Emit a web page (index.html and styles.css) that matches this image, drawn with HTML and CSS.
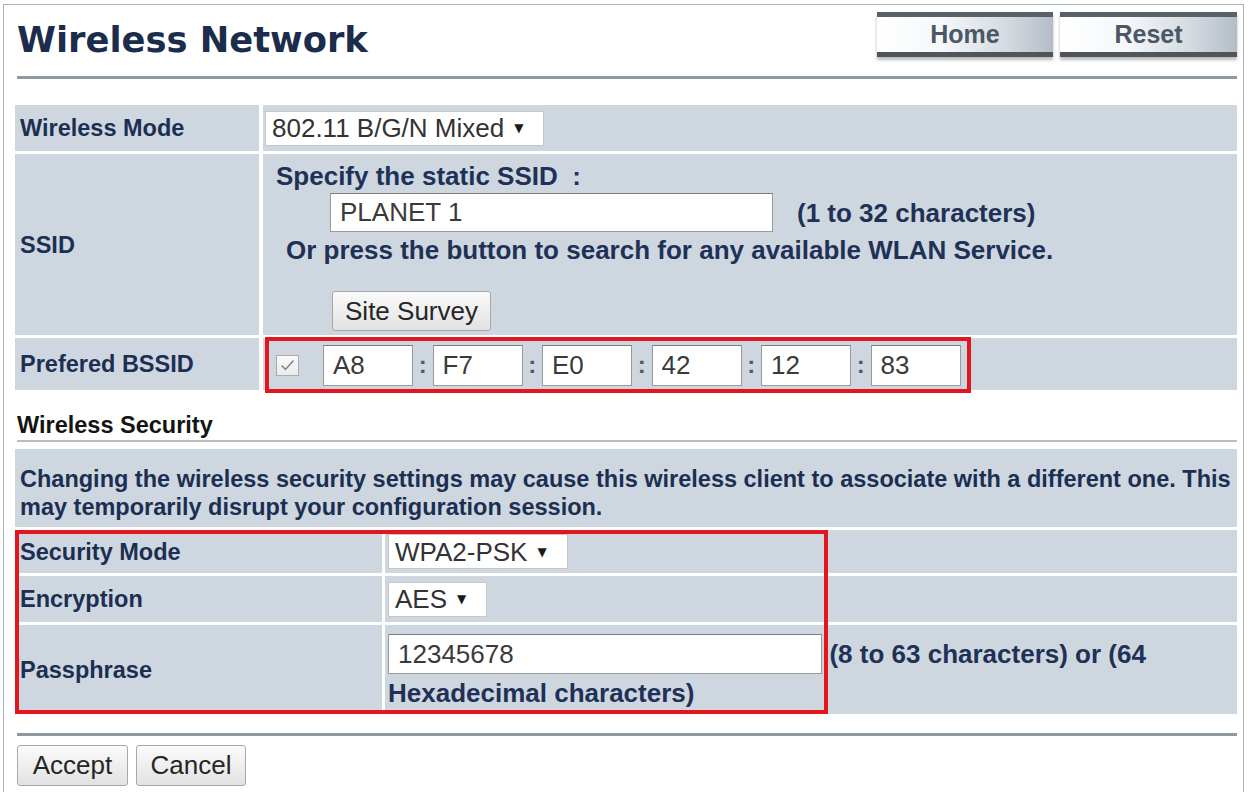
FILE: index.html
```html
<!DOCTYPE html>
<html lang="en">
<head>
<meta charset="utf-8">
<title>Wireless Network</title>
<link rel="stylesheet" href="styles.css">
</head>
<body>
<div class="frame">
  <header class="page-head">
    <h1 class="page-title">Wireless Network</h1>
    <nav class="tabs">
      <a class="tab" href="#">Home</a>
      <a class="tab tab-wide" href="#">Reset</a>
    </nav>
  </header>
  <div class="rule"></div>

  <div class="basic">
    <div class="cell label">Wireless Mode</div>
    <div class="cell value">
      <span class="select">802.11 B/G/N Mixed<span class="caret">▼</span></span>
    </div>

    <div class="cell label">SSID</div>
    <div class="cell value-ssid">
      <div class="hint">Specify the static SSID &nbsp;:</div>
      <div class="ssid-line">
        <input class="field ssid-field" type="text" value="PLANET 1">
        <span class="hint ssid-range">(1 to 32 characters)</span>
      </div>
      <div class="hint survey-note">Or press the button to search for any available WLAN Service.</div>
      <div class="survey-line"><button class="btn survey-btn" type="button">Site Survey</button></div>
    </div>

    <div class="cell label">Prefered BSSID</div>
    <div class="cell value-bssid">
      <div class="bssid">
        <span class="check">
          <svg width="21" height="19" viewBox="0 0 21 19"><path d="M4.5 9.5 L8.5 13.5 L16.5 4.5" fill="none" stroke="#80868c" stroke-width="1.5"/></svg>
        </span>
        <input class="field octet" type="text" value="A8"><span class="sep">:</span><input class="field octet" type="text" value="F7"><span class="sep">:</span><input class="field octet" type="text" value="E0"><span class="sep">:</span><input class="field octet" type="text" value="42"><span class="sep">:</span><input class="field octet" type="text" value="12"><span class="sep">:</span><input class="field octet" type="text" value="83">
      </div>
    </div>
  </div>

  <div class="section-title">Wireless Security</div>

  <div class="security">
    <div class="cell notice">Changing the wireless security settings may cause this wireless client to associate with a different one. This may temporarily disrupt your configuration session.</div>

    <div class="cell label row-mode">Security Mode</div>
    <div class="cell value row-mode">
      <span class="select">WPA2-PSK<span class="caret">▼</span></span>
    </div>

    <div class="cell label row-enc">Encryption</div>
    <div class="cell value row-enc">
      <span class="select">AES<span class="caret">▼</span></span>
    </div>

    <div class="cell label row-pass">Passphrase</div>
    <div class="cell value-pass row-pass">
      <input class="field pass-field" type="text" value="12345678"> <span class="hint">(8 to 63 characters) or (64 Hexadecimal characters)</span>
    </div>

    <div class="highlight"></div>
  </div>

  <div class="rule rule-bottom"></div>

  <div class="actions">
    <button class="btn btn-accept" type="button">Accept</button>
    <button class="btn btn-cancel" type="button">Cancel</button>
  </div>
</div>
</body>
</html>
```

FILE: styles.css
```css
* {
  box-sizing: border-box;
}

html,
body {
  margin: 0;
  padding: 0;
  background: #ffffff;
}

body {
  font-family: "Liberation Sans", Arial, sans-serif;
  color: #1f3156;
}

/* page frame */
.frame {
  margin: 4px 0 0 3px;
  width: 1241px;
  min-height: 788px;
  border: 1px solid #adb3b9;
  border-bottom: none;
  padding: 0 6px 0 11px;
}

/* title bar */
.page-head {
  height: 71px;
  display: flex;
  justify-content: space-between;
  align-items: flex-start;
}

.page-title {
  margin: 13px 0 0 2px;
  font: bold 35.3px/44px "DejaVu Sans", Verdana, sans-serif;
  color: #1b2c4c;
}

.tabs {
  display: flex;
  gap: 7px;
  margin-top: 7px;
}

.tab {
  width: 176px;
  height: 45px;
  display: flex;
  align-items: center;
  justify-content: center;
  border-top: 5px solid #5b6168;
  border-bottom: 5px solid #4f555b;
  background: linear-gradient(90deg, #ffffff 0%, #f5f7f9 38%, #d3d9df 75%, #b4bdc6 100%);
  box-shadow: 0 3px 3px rgba(60, 60, 60, 0.35);
  font: bold 25px/1 "Liberation Sans", Arial, sans-serif;
  color: #4b5765;
  text-decoration: none;
}

.tab-wide {
  width: 177px;
}

.rule {
  height: 3px;
  margin-left: 2px;
  background: #8f999f;
}

/* shared cells */
.cell {
  background: #ced7e0;
}

.label {
  display: flex;
  align-items: center;
  padding-left: 5px;
  font: bold 23.5px/28px "Liberation Sans", Arial, sans-serif;
  color: #1c2f52;
}

.value {
  display: flex;
  align-items: center;
  padding-left: 2px;
}

.hint {
  font: bold 26px/28px "Liberation Sans", Arial, sans-serif;
  color: #1f3156;
}

.select {
  display: inline-flex;
  align-items: center;
  height: 35px;
  padding: 0 20px 0 6px;
  border: 1px solid #c5c8cb;
  background: #ffffff;
  font: 26px/1 "Liberation Sans", Arial, sans-serif;
  color: #333333;
}

.caret {
  margin-left: 10px;
  font: 12px/1 "DejaVu Sans", sans-serif;
  color: #1a1a1a;
}

.field {
  height: 40px;
  margin: 0;
  padding: 0 0 0 9px;
  border: 1px solid #9a9a9a;
  border-top-color: #7d7d7d;
  background: #ffffff;
  font: 26px "Liberation Sans", Arial, sans-serif;
  color: #3a3a3a;
  outline: none;
}

.btn {
  height: 41px;
  margin: 0;
  padding: 0;
  border: 1px solid #a8a8a8;
  border-radius: 3px;
  background: linear-gradient(#fbfbfb, #e2e2e2);
  font: 26px "Liberation Sans", Arial, sans-serif;
  color: #262626;
}

.btn-accept {
  width: 111px;
}

.btn-cancel {
  width: 110px;
}

/* general settings */
.basic {
  display: grid;
  grid-template-columns: 244px 1fr;
  grid-template-rows: 46px 181px 52px;
  gap: 3px 4px;
  margin-top: 26px;
}

.value-ssid {
  padding: 8px 0 0 13px;
}

.ssid-line {
  display: flex;
  align-items: center;
  margin-top: 3px;
}

.ssid-field {
  width: 443px;
  height: 39px;
  margin-left: 54px;
}

.ssid-range {
  margin-left: 24px;
}

.survey-note {
  margin: 4px 0 0 10px;
}

.survey-line {
  margin: 27px 0 0 56px;
}

.survey-btn {
  width: 159px;
  height: 40px;
}

.value-bssid {
  padding-left: 2px;
}

.bssid {
  display: inline-flex;
  align-items: center;
  height: 56px;
  margin-top: -1px;
  padding: 0 6px 0 7px;
  border: 4px solid #e3151d;
}

.check {
  display: inline-flex;
  align-items: center;
  justify-content: center;
  width: 23px;
  height: 21px;
  margin-right: 24px;
  border: 1px solid #a9abad;
  background: linear-gradient(#fafafa, #ebebeb);
}

.octet {
  width: 90px;
  height: 41px;
}

.sep {
  width: 19.5px;
  text-align: center;
  font: bold 24px/1 "Liberation Sans", Arial, sans-serif;
  color: #55595e;
}

/* security settings */
.section-title {
  margin: 21px 0 0 2px;
  padding-bottom: 1px;
  border-bottom: 2px solid #b6bec4;
  font: bold 23.5px/28px "Liberation Sans", Arial, sans-serif;
  color: #141414;
}

.security {
  display: grid;
  grid-template-columns: 367px 443px 1fr;
  grid-template-rows: 78px 43px 46px 89px;
  gap: 3px;
  margin-top: 7px;
}

.notice {
  grid-row: 1;
  grid-column: 1 / 4;
  padding: 16px 0 0 5px;
  font: bold 23.5px/28px "Liberation Sans", Arial, sans-serif;
  color: #1c2f52;
}

.security .label {
  grid-column: 1;
}

.security .value,
.security .value-pass {
  grid-column: 2 / 4;
  padding-left: 3px;
}

.row-mode {
  grid-row: 2;
}

.row-enc {
  grid-row: 3;
}

.row-pass {
  grid-row: 4;
}

.value-pass {
  padding-top: 9px;
}

.pass-field {
  width: 434px;
  margin: 0 3px 5px 0;
}

.highlight {
  grid-row: 2 / 5;
  grid-column: 1 / 3;
  border: 4px solid #e3151d;
  pointer-events: none;
}

.rule-bottom {
  margin-top: 19px;
}

.actions {
  display: flex;
  gap: 8px;
  margin: 9px 0 0 2px;
}
```
